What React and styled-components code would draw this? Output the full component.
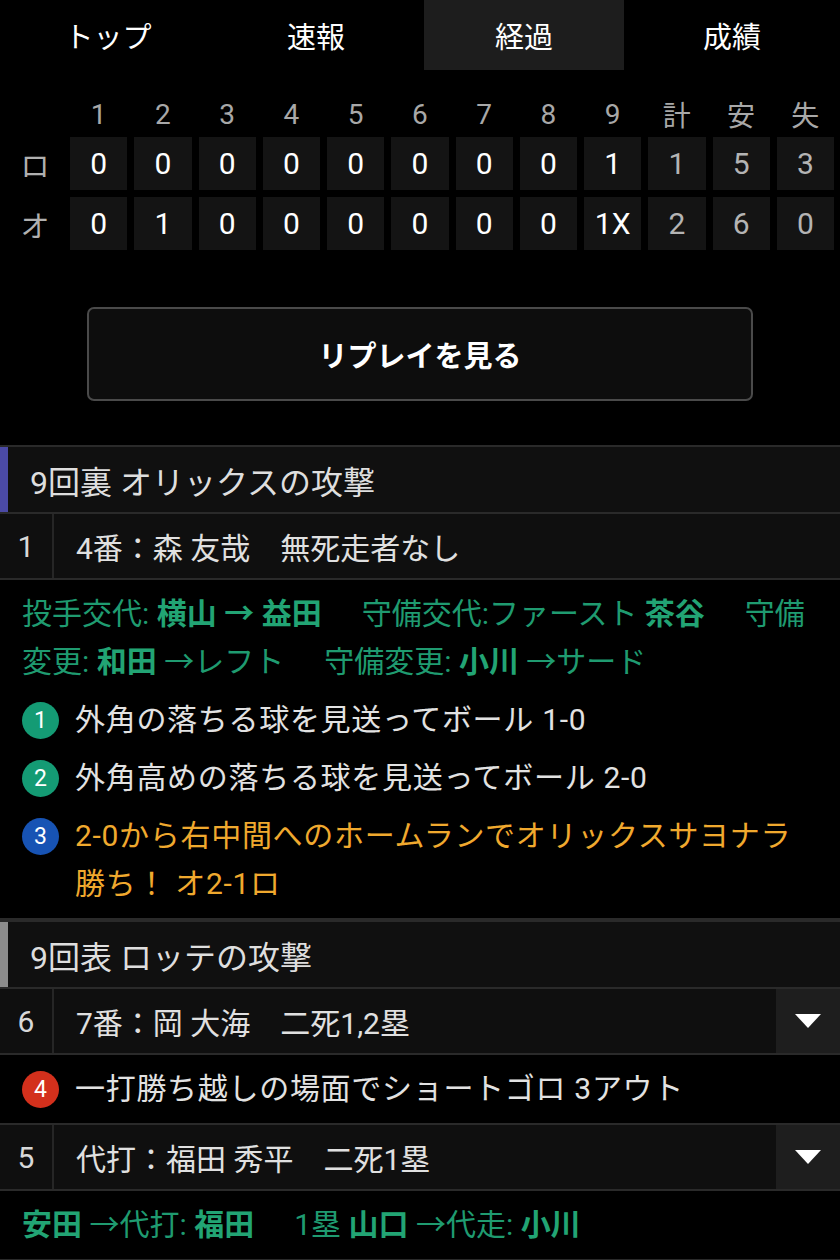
import React from "react";
import styled, { createGlobalStyle } from "styled-components";

const GlobalStyle = createGlobalStyle`
  html, body {
    margin: 0;
    padding: 0;
    background: #000;
  }
  body {
    font-family: Roboto, "Noto Sans CJK JP", sans-serif;
    color: #e6e6e6;
    width: 840px;
    overflow: hidden;
  }
`;

const tabs = ["トップ", "速報", "経過", "成績"];
const innings = ["1", "2", "3", "4", "5", "6", "7", "8", "9"];
const totalsHead = ["計", "安", "失"];
const lines = [
  { team: "ロ", runs: ["0", "0", "0", "0", "0", "0", "0", "0", "1"], totals: ["1", "5", "3"] },
  { team: "オ", runs: ["0", "1", "0", "0", "0", "0", "0", "0", "1X"], totals: ["2", "6", "0"] },
];

const Arrow = () => (
  <svg width="28" height="16" viewBox="0 0 28 16">
    <polygon points="1,1 27,1 14,15" fill="#fff" />
  </svg>
);

const App = () => {
  return (
    <Page>
      <GlobalStyle />
      <TabBar>
        {tabs.map((t) => (
          <Tab key={t} $active={t === "経過"}>
            {t}
          </Tab>
        ))}
      </TabBar>

      <Score>
        <HeadCell />
        {innings.map((n) => (
          <HeadCell key={n}>{n}</HeadCell>
        ))}
        {totalsHead.map((n) => (
          <HeadCell key={n}>{n}</HeadCell>
        ))}
        {lines.map((line) => (
          <React.Fragment key={line.team}>
            <TeamCell>{line.team}</TeamCell>
            {line.runs.map((r, i) => (
              <RunCell key={i}>{r}</RunCell>
            ))}
            {line.totals.map((r, i) => (
              <RunCell key={"t" + i} $dim>
                {r}
              </RunCell>
            ))}
          </React.Fragment>
        ))}
      </Score>

      <ReplayButton>リプレイを見る</ReplayButton>

      <Section>
        <SectionHeader $accent="#4b4aa6">9回裏 オリックスの攻撃</SectionHeader>
        <BatterRow>
          <BatterNo>1</BatterNo>
          <BatterText>4番：森 友哉　無死走者なし</BatterText>
        </BatterRow>
        <Events>
          <Changes>
            <Change>
              投手交代: <b>横山 → 益田</b>
            </Change>
            <Change>
              守備交代:ファースト <b>茶谷</b>
            </Change>
            <Change>
              守備変更: <b>和田</b> →レフト
            </Change>
            <Change>
              守備変更: <b>小川</b> →サード
            </Change>
          </Changes>
          <Pitch>
            <Badge $color="#149b74">1</Badge>
            <PitchText>外角の落ちる球を見送ってボール 1-0</PitchText>
          </Pitch>
          <Pitch>
            <Badge $color="#149b74">2</Badge>
            <PitchText>外角高めの落ちる球を見送ってボール 2-0</PitchText>
          </Pitch>
          <Pitch>
            <Badge $color="#1753b4">3</Badge>
            <PitchText $highlight>
              2-0から右中間へのホームランでオリックスサヨナラ勝ち！ オ2-1ロ
            </PitchText>
          </Pitch>
        </Events>
      </Section>

      <Section>
        <SectionHeader $accent="#8c8c8c">9回表 ロッテの攻撃</SectionHeader>
        <BatterRow>
          <BatterNo>6</BatterNo>
          <BatterText>7番：岡 大海　二死1,2塁</BatterText>
          <Toggle>
            <Arrow />
          </Toggle>
        </BatterRow>
        <Events>
          <Pitch $first>
            <Badge $color="#d3301c">4</Badge>
            <PitchText>一打勝ち越しの場面でショートゴロ 3アウト</PitchText>
          </Pitch>
        </Events>
        <BatterRow>
          <BatterNo>5</BatterNo>
          <BatterText>代打：福田 秀平　二死1塁</BatterText>
          <Toggle>
            <Arrow />
          </Toggle>
        </BatterRow>
        <Events>
          <Changes>
            <Change>
              <b>安田</b> →代打: <b>福田</b>
            </Change>
            <Change>
              1塁 <b>山口</b> →代走: <b>小川</b>
            </Change>
          </Changes>
        </Events>
      </Section>
    </Page>
  );
};

const Page = styled.div`
  width: 840px;
  min-height: 1260px;
  background: #000;
`;

const TabBar = styled.nav`
  display: grid;
  grid-template-columns: repeat(4, 1fr);
  gap: 8px;
  padding: 0 8px;
`;

const Tab = styled.div`
  height: 70px;
  display: flex;
  align-items: center;
  justify-content: center;
  font-size: 29px;
  color: #fff;
  background: ${(p) => (p.$active ? "#1d1d1d" : "transparent")};
`;

const Score = styled.div`
  display: grid;
  grid-template-columns: 56px repeat(12, 1fr);
  grid-template-rows: 32px 53px 53px;
  column-gap: 7px;
  row-gap: 7px;
  padding: 28px 6px 0 7px;
`;

const HeadCell = styled.div`
  display: flex;
  align-items: center;
  justify-content: center;
  font-size: 28px;
  color: #a8a8a8;
`;

const TeamCell = styled(HeadCell)`
  font-size: 29px;
  color: #b0b0b0;
`;

const RunCell = styled.div`
  display: flex;
  align-items: center;
  justify-content: center;
  background: #141414;
  font-size: 30px;
  color: ${(p) => (p.$dim ? "#b4b4b4" : "#fff")};
`;

const ReplayButton = styled.button`
  display: block;
  width: 666px;
  height: 94px;
  margin: 57px auto 0;
  background: #0d0d0d;
  border: 2px solid #4a4a4a;
  border-radius: 7px;
  color: #fff;
  font-family: Roboto, "Noto Sans CJK JP", sans-serif;
  font-size: 29px;
  font-weight: 700;
`;

const Section = styled.section`
  border-bottom: 2px solid #2a2a2a;
  &:first-of-type {
    margin-top: 44px;
  }
`;

const SectionHeader = styled.h2`
  margin: 0;
  height: 65px;
  display: flex;
  align-items: center;
  padding-left: 30px;
  border-top: 2px solid #2a2a2a;
  border-bottom: 2px solid #2a2a2a;
  background: #101010;
  box-shadow: inset 8px 0 0 ${(p) => p.$accent};
  font-size: 32px;
  font-weight: 400;
  color: #dedede;
`;

const BatterRow = styled.div`
  display: flex;
  align-items: stretch;
  height: 64px;
  background: #0f0f0f;
  border-bottom: 2px solid #2a2a2a;
`;

const BatterNo = styled.div`
  width: 52px;
  display: flex;
  align-items: center;
  justify-content: center;
  border-right: 2px solid #262626;
  font-size: 30px;
  color: #d8d8d8;
`;

const BatterText = styled.div`
  flex: 1;
  display: flex;
  align-items: center;
  padding-left: 22px;
  font-size: 30px;
  color: #e0e0e0;
  white-space: pre;
`;

const Toggle = styled.div`
  width: 64px;
  display: flex;
  align-items: center;
  justify-content: center;
  background: #1e1e1e;
`;

const Events = styled.div`
  padding: 10px 22px 10px;
  background: #000;
  & + ${BatterRow} {
    border-top: 2px solid #2a2a2a;
  }
`;

const Changes = styled.div`
  font-size: 30px;
  line-height: 48px;
  color: #1f9b70;
  b {
    font-weight: 700;
    color: #22a474;
  }
`;

const Change = styled.span`
  margin-right: 40px;
  &:last-child {
    margin-right: 0;
  }
`;

const Pitch = styled.div`
  display: flex;
  align-items: flex-start;
  gap: 16px;
  margin-top: ${(p) => (p.$first ? "0" : "10px")};
`;

const Badge = styled.span`
  flex: none;
  width: 37px;
  height: 37px;
  margin-top: 6px;
  border-radius: 50%;
  background: ${(p) => p.$color};
  color: #fff;
  font-size: 23px;
  display: flex;
  align-items: center;
  justify-content: center;
`;

const PitchText = styled.div`
  padding-right: 4px;
  font-size: 30px;
  line-height: 48px;
  letter-spacing: 0.7px;
  color: ${(p) => (p.$highlight ? "#f0a92e" : "#e2e2e2")};
`;

export default App;
